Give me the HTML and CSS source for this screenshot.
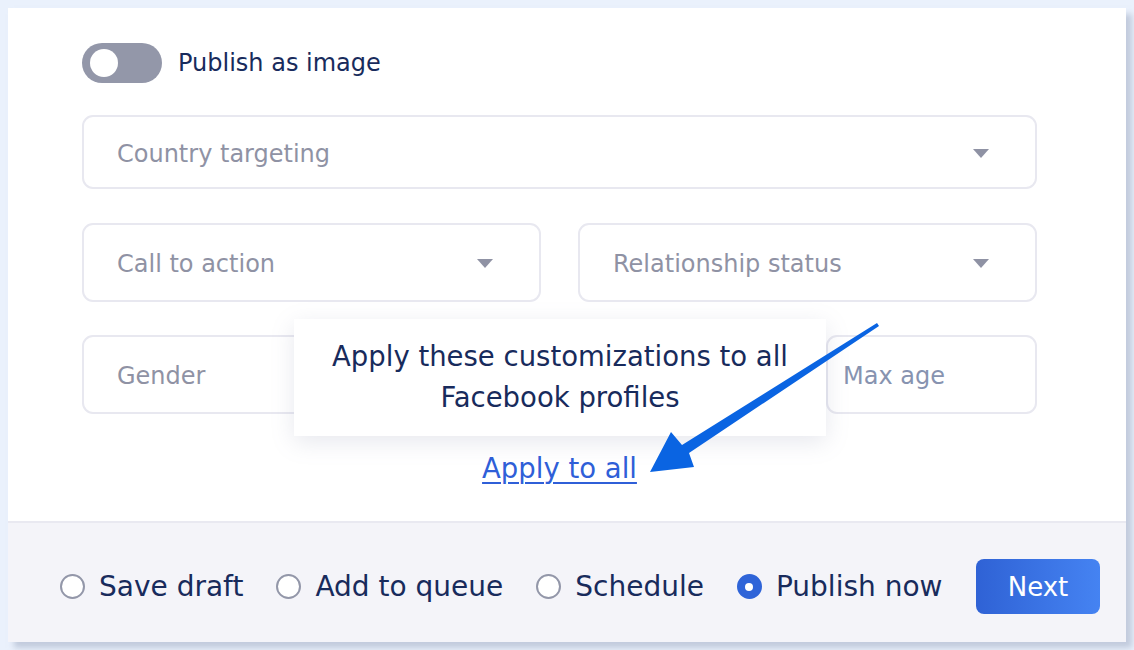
FILE: index.html
```html
<!DOCTYPE html>
<html>
<head>
<meta charset="utf-8">
<link rel="stylesheet" href="styles.css">
</head>
<body>
<div class="card">
  <div class="content">
    <div class="toggle-row">
      <span class="toggle"><span class="knob"></span></span>
      <span class="toggle-label">Publish as image</span>
    </div>
    <div class="field field-first">
      <span class="ph">Country targeting</span>
      <span class="caret"></span>
    </div>
    <div class="row">
      <div class="field half">
        <span class="ph">Call to action</span>
        <span class="caret"></span>
      </div>
      <div class="field half">
        <span class="ph">Relationship status</span>
        <span class="caret"></span>
      </div>
    </div>
    <div class="row row3">
      <div class="field half">
        <span class="ph">Gender</span>
        <span class="caret"></span>
      </div>
      <div class="field quarter input"></div>
      <div class="field quarter input">
        <span class="ph alt">Max age</span>
      </div>
    </div>
    <div class="apply">
      <div class="tooltip">Apply these customizations to all<br>Facebook profiles</div>
      <a class="apply-link" href="#">Apply to all</a>
      <svg class="arrow" width="250" height="165" viewBox="0 0 250 165">
        <path d="M237 7 L239 10 L49 137 L54 151 L10 156 L31 116 L42 129 Z" fill="#0a64e2"/>
      </svg>
    </div>
  </div>
  <div class="footer">
    <label class="radio"><span class="dot"></span>Save draft</label>
    <label class="radio"><span class="dot"></span>Add to queue</label>
    <label class="radio"><span class="dot"></span>Schedule</label>
    <label class="radio"><span class="dot on"></span>Publish now</label>
    <button class="next">Next</button>
  </div>
</div>
</body>
</html>
```
FILE: styles.css
```css
html, body {
  margin: 0;
  padding: 0;
}
body {
  background: #eaf1fc;
  padding: 8px;
  width: 1118px;
  font-family: "DejaVu Sans", "Open Sans", sans-serif;
  color: #182b5c;
}
.card {
  background: #ffffff;
  width: 1118px;
  height: 634px;
  display: flex;
  flex-direction: column;
  box-shadow: 6px 6px 6px rgba(160, 172, 195, 0.55);
}
.content {
  flex: 1;
  padding: 35px 89px 0 74px;
  display: flex;
  flex-direction: column;
}
.toggle-row {
  display: flex;
  align-items: center;
  height: 40px;
  gap: 16px;
}
.toggle {
  width: 80px;
  height: 40px;
  border-radius: 20px;
  background: #9397a9;
  display: flex;
  align-items: center;
  padding-left: 8px;
  box-sizing: border-box;
}
.knob {
  width: 28px;
  height: 28px;
  border-radius: 50%;
  background: #fff;
}
.toggle-label {
  font-size: 24px;
  color: #182b5c;
}
.field {
  border: 2px solid #e8e8f0;
  border-radius: 11px;
  box-sizing: border-box;
  height: 79px;
  display: flex;
  align-items: center;
  justify-content: space-between;
  padding: 2px 46px 0 33px;
}
.field-first {
  margin-top: 32px;
  height: 74px;
  padding-top: 3px;
}
.row {
  margin-top: 34px;
  display: flex;
  gap: 37px;
}
.row3 {
  margin-top: 33px;
}
.half {
  width: 459px;
}
.quarter {
  width: 211px;
}
.input {
  padding-left: 15px;
}
.ph {
  font-size: 24px;
  color: #8f92a4;
}
.ph.alt {
  color: #8793b0;
}
.caret {
  width: 0;
  height: 0;
  border-left: 8px solid transparent;
  border-right: 8px solid transparent;
  border-top: 9px solid #8f92a4;
}
.apply {
  position: relative;
  margin-top: 38px;
  text-align: center;
  line-height: 32px;
}
.apply-link {
  font-size: 27.5px;
  color: #2f5fd8;
  text-decoration: underline;
  text-underline-offset: 4px;
  text-decoration-thickness: 2px;
}
.tooltip {
  position: absolute;
  left: 212px;
  top: -133px;
  width: 532px;
  height: 117px;
  box-sizing: border-box;
  background: #fff;
  box-shadow: 0 6px 22px rgba(120, 130, 160, 0.18);
  font-size: 27.5px;
  line-height: 41px;
  padding-top: 17px;
  color: #182b5c;
}
.arrow {
  position: absolute;
  left: 558px;
  top: -136px;
}
.footer {
  height: 121px;
  background: #f4f4f9;
  border-top: 2px solid #e9e9f1;
  box-sizing: border-box;
  display: flex;
  align-items: center;
  padding: 8px 26px 0 52px;
}
.radio {
  display: flex;
  align-items: center;
  font-size: 28px;
  color: #182b5c;
  margin-right: 33px;
  white-space: nowrap;
  flex-shrink: 0;
}
.dot {
  width: 25px;
  height: 25px;
  border-radius: 50%;
  background: #fff;
  border: 2px solid #9397a9;
  box-sizing: border-box;
  margin-right: 14px;
  display: flex;
  align-items: center;
  justify-content: center;
  flex-shrink: 0;
}
.dot.on {
  background: #2f64d8;
  border-color: #2f64d8;
}
.dot.on::after {
  content: "";
  width: 8px;
  height: 8px;
  border-radius: 50%;
  background: #fff;
}
.next {
  margin-left: auto;
  flex-shrink: 0;
  width: 124px;
  height: 55px;
  border: none;
  border-radius: 8px;
  background: linear-gradient(90deg, #2f62d5, #4583f2);
  color: #fff;
  font-family: inherit;
  font-size: 26px;
}
```
